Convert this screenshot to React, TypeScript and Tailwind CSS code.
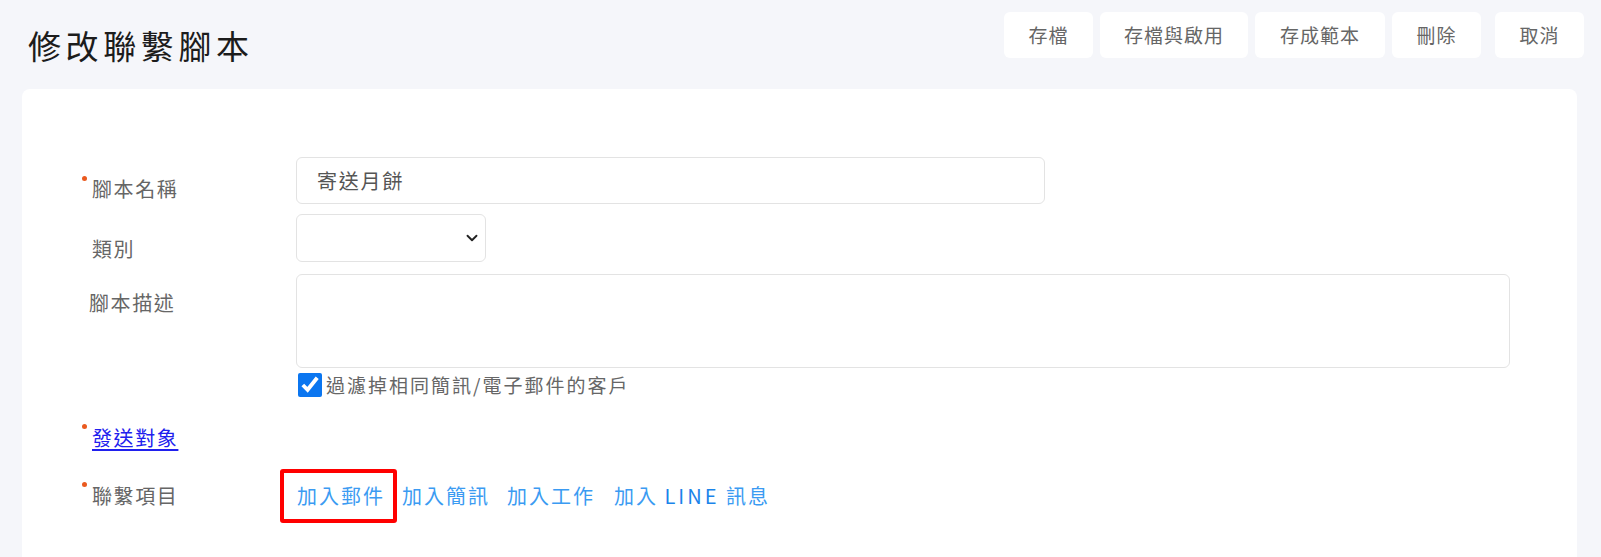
import { ChevronDown } from "lucide-react";

const FONT = { fontFamily: '"Noto Sans CJK TC", "Noto Sans", sans-serif' };

const ACTIONS = [
    { label: "存檔", w: "w-[89px]" },
    { label: "存檔與啟用", w: "w-[148px]" },
    { label: "存成範本", w: "w-[130px]" },
    { label: "刪除", w: "w-[89px]" },
];

const Dot = () => (
    <span className="absolute left-0 top-0 w-[5px] h-[5px] rounded-full bg-[#ea5a1f]" />
);

const App = () => {
    return (
        <div className="min-h-screen bg-[#f5f6fa] pl-[22px] pr-[17px] overflow-hidden" style={FONT}>
            {/* Header */}
            <div className="flex items-start justify-between pt-[12px] h-[58px]">
                <h1 className="ml-[6px] mt-[14px] text-[33px] leading-[38px] tracking-[4.6px] text-[#1c1c1c] font-normal">
                    修改聯繫腳本
                </h1>
                <div className="flex items-center">
                    <div className="flex gap-[7px]">
                        {ACTIONS.map((a) => (
                            <button
                                key={a.label}
                                className={`${a.w} h-[46px] rounded-md bg-white text-[19px] text-[#666] tracking-[1px]`}
                            >
                                {a.label}
                            </button>
                        ))}
                    </div>
                    <button className="ml-[14px] w-[89px] h-[46px] rounded-md bg-white text-[19px] text-[#666] tracking-[1px]">
                        取消
                    </button>
                </div>
            </div>

            {/* Card */}
            <div className="mt-[31px] mr-[7px] h-[480px] rounded-lg bg-white pl-[60px] pt-[68px]">
                {/* 腳本名稱 */}
                <div className="flex items-start">
                    <div className="relative w-[214px] pl-[10px] pt-[18px]">
                        <span className="absolute left-0 top-[19px] w-[5px] h-[5px] rounded-full bg-[#ea5a1f]" />
                        <span className="text-[20px] leading-[28px] tracking-[1.6px] text-[#666]">腳本名稱</span>
                    </div>
                    <div className="w-[749px] h-[47px] rounded-md border border-[#e3e3e3] flex items-center pl-[20px] text-[20px] tracking-[1.8px] text-[#555]">
                        寄送月餅
                    </div>
                </div>

                {/* 類別 */}
                <div className="flex items-start mt-[10px]">
                    <div className="w-[214px] pl-[10px] pt-[21px]">
                        <span className="text-[20px] leading-[28px] tracking-[1.6px] text-[#666]">類別</span>
                    </div>
                    <div className="w-[190px] h-[48px] rounded-md border border-[#e3e3e3] flex items-center justify-end pr-[4px]">
                        <ChevronDown className="w-[18px] h-[18px] text-[#222]" strokeWidth={2.5} />
                    </div>
                </div>

                {/* 腳本描述 */}
                <div className="flex items-start mt-[11px]">
                    <div className="w-[214px] pl-[7px] pt-[15px]">
                        <span className="text-[20px] leading-[28px] tracking-[1.6px] text-[#666]">腳本描述</span>
                    </div>
                    <div className="flex flex-col">
                        <div className="w-[1214px] h-[94px] rounded-md border border-[#e3e3e3]" />
                        <label className="flex items-center mt-[4px] ml-[2px] h-[26px]">
                            <input
                                type="checkbox"
                                defaultChecked
                                className="w-[24px] h-[24px] m-0 accent-[#0b76f0]"
                            />
                            <span className="ml-[4px] text-[19px] leading-[26px] tracking-[2px] text-[#666]">
                                過濾掉相同簡訊/電子郵件的客戶
                            </span>
                        </label>
                    </div>
                </div>

                {/* 發送對象 */}
                <div className="relative mt-[26px] pl-[10px] h-[30px]">
                    <Dot />
                    <a href="#" className="text-[20px] leading-[28px] tracking-[1.6px] text-[#2020ee] underline underline-offset-[3px]">
                        發送對象
                    </a>
                </div>

                {/* 聯繫項目 */}
                <div className="flex items-center mt-[15px]">
                    <div className="relative w-[198px] pl-[10px] h-[54px] flex items-center">
                        <span className="absolute left-0 top-[13px] w-[5px] h-[5px] rounded-full bg-[#ea5a1f]" />
                        <span className="text-[20px] leading-[28px] tracking-[1.6px] text-[#666]">聯繫項目</span>
                    </div>
                    <div className="flex items-center text-[20px] leading-[28px] tracking-[2px] text-[#3b9bf2]">
                        <span className="border-[4px] border-[#ff0000] rounded-[3px] h-[54px] w-[117px] flex items-center pl-[13px]">
                            加入郵件
                        </span>
                        <span className="ml-[5px]">加入簡訊</span>
                        <span className="ml-[17px]">加入工作</span>
                        <span className="ml-[19px]">
                            加入 <span className="text-[#1b84ea] tracking-[3px]">LINE</span> 訊息
                        </span>
                    </div>
                </div>
            </div>
        </div>
    );
};

export default App;
